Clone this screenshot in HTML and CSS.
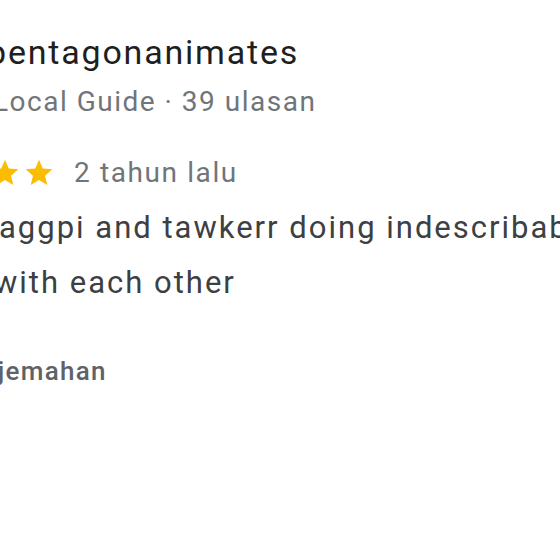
FILE: index.html
```html
<!DOCTYPE html>
<html>
<head>
<meta charset="utf-8">
<link rel="stylesheet" href="styles.css">
</head>
<body>
<div class="review">
  <div class="author">
    <div class="name">pentagonanimates</div>
    <div class="meta">Local Guide · 39 ulasan</div>
  </div>
  <div class="rating">
    <div class="stars">
      <svg class="star" viewBox="0 0 24 24"><path d="M12 17.27L18.18 21l-1.64-7.03L22 9.24l-7.19-.61L12 2 9.19 8.63 2 9.24l5.46 4.73L5.820 21z"/></svg>
      <svg class="star" viewBox="0 0 24 24"><path d="M12 17.27L18.18 21l-1.64-7.03L22 9.24l-7.19-.61L12 2 9.19 8.63 2 9.24l5.46 4.73L5.82 21z"/></svg>
      <svg class="star" viewBox="0 0 24 24"><path d="M12 17.27L18.18 21l-1.64-7.03L22 9.24l-7.19-.61L12 2 9.19 8.63 2 9.24l5.46 4.73L5.82 21z"/></svg>
      <svg class="star" viewBox="0 0 24 24"><path d="M12 17.27L18.18 21l-1.64-7.03L22 9.24l-7.19-.61L12 2 9.19 8.63 2 9.24l5.46 4.73L5.82 21z"/></svg>
      <svg class="star" viewBox="0 0 24 24"><path d="M12 17.27L18.18 21l-1.64-7.03L22 9.24l-7.19-.61L12 2 9.19 8.63 2 9.24l5.46 4.73L5.82 21z"/></svg>
    </div>
    <span class="time">2 tahun lalu</span>
  </div>
  <div class="text">aggpi and tawkerr doing indescribable things<br>with each other</div>
  <div class="translate">terjemahan</div>
</div>
</body>
</html>
```
FILE: styles.css
```css
html, body {
  margin: 0;
  padding: 0;
  background: #ffffff;
  overflow: hidden;
  width: 560px;
  height: 560px;
}
.review {
  font-family: Roboto, "Noto Sans", sans-serif;
  padding-top: 32px;
  white-space: nowrap;
}
.author {
  display: flex;
  flex-direction: column;
}
.name {
  font-size: 34px;
  letter-spacing: 1.8px;
  color: #1f1f1f;
  line-height: 40px;
  margin-left: -13px;
}
.meta {
  font-size: 28px;
  letter-spacing: 1.5px;
  color: #70757a;
  line-height: 36px;
  margin-top: 12px;
  margin-left: -7px;
}
.rating {
  display: flex;
  align-items: center;
  height: 36px;
  margin-top: 35px;
  margin-left: -113px;
}
.stars {
  display: flex;
  gap: 2px;
}
.star {
  width: 32px;
  height: 32px;
  fill: #fbbc04;
  display: block;
}
.time {
  font-size: 28px;
  letter-spacing: 1.6px;
  color: #70757a;
  line-height: 36px;
  margin-left: 19px;
}
.text {
  font-size: 31px;
  letter-spacing: 2px;
  color: #3c4043;
  line-height: 55px;
  margin-top: 9px;
  margin-left: -6px;
  text-indent: 5px;
}
.translate {
  font-size: 26px;
  letter-spacing: 1.3px;
  font-weight: 500;
  color: #5f6368;
  line-height: 34px;
  margin-top: 44px;
  margin-left: -38px;
}
```
